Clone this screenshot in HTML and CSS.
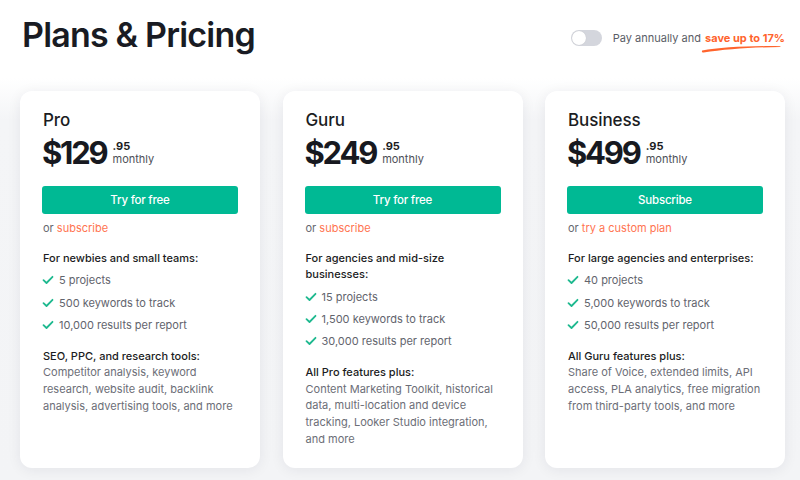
FILE: index.html
```html
<!DOCTYPE html>
<html lang="en">
<head>
<meta charset="utf-8">
<title>Plans &amp; Pricing</title>
<link rel="stylesheet" href="styles.css">
</head>
<body>
<div class="page">
  <header class="top">
    <h1 class="title">Plans &amp; Pricing</h1>
    <div class="billing">
      <span class="toggle"><span class="knob"></span></span>
      <span class="billing-text">Pay annually and <span class="save">save up to 17%<svg class="swoosh" viewBox="0 0 80 8" width="80" height="8"><path d="M1.2 5.6 C 18 2.4, 50 0.6, 79.5 1.2 C 79.6 1.6, 79.4 1.9, 79 1.9 C 52 2.4, 24 4.2, 2.6 7.6 C 1.2 7.8, 0.4 6.2, 1.2 5.6 Z" fill="#ff642d"/></svg></span></span>
    </div>
  </header>

  <main class="cards">
    <section class="card">
      <h2 class="plan">Pro</h2>
      <div class="price"><span class="amount">$129</span><span class="cents"><b>.95</b><span>monthly</span></span></div>
      <button class="cta">Try for free</button>
      <p class="alt">or <a>subscribe</a></p>
      <p class="for">For newbies and small teams:</p>
      <ul class="list">
        <li><svg class="check" viewBox="0 0 12 10" width="12" height="10"><path d="M1.5 5.2 L4.5 8 L10.5 1.8" fill="none" stroke="#1eb98f" stroke-width="1.8" stroke-linecap="round" stroke-linejoin="round"/></svg>5 projects</li>
        <li><svg class="check" viewBox="0 0 12 10" width="12" height="10"><path d="M1.5 5.2 L4.5 8 L10.5 1.8" fill="none" stroke="#1eb98f" stroke-width="1.8" stroke-linecap="round" stroke-linejoin="round"/></svg>500 keywords to track</li>
        <li><svg class="check" viewBox="0 0 12 10" width="12" height="10"><path d="M1.5 5.2 L4.5 8 L10.5 1.8" fill="none" stroke="#1eb98f" stroke-width="1.8" stroke-linecap="round" stroke-linejoin="round"/></svg>10,000 results per report</li>
      </ul>
      <p class="feat-head">SEO, PPC, and research tools:</p>
      <p class="feat">Competitor analysis, keyword research, website audit, backlink analysis, advertising tools, and more</p>
    </section>

    <section class="card">
      <h2 class="plan">Guru</h2>
      <div class="price"><span class="amount">$249</span><span class="cents"><b>.95</b><span>monthly</span></span></div>
      <button class="cta">Try for free</button>
      <p class="alt">or <a>subscribe</a></p>
      <p class="for">For agencies and mid-size<br>businesses:</p>
      <ul class="list">
        <li><svg class="check" viewBox="0 0 12 10" width="12" height="10"><path d="M1.5 5.2 L4.5 8 L10.5 1.8" fill="none" stroke="#1eb98f" stroke-width="1.8" stroke-linecap="round" stroke-linejoin="round"/></svg>15 projects</li>
        <li><svg class="check" viewBox="0 0 12 10" width="12" height="10"><path d="M1.5 5.2 L4.5 8 L10.5 1.8" fill="none" stroke="#1eb98f" stroke-width="1.8" stroke-linecap="round" stroke-linejoin="round"/></svg>1,500 keywords to track</li>
        <li><svg class="check" viewBox="0 0 12 10" width="12" height="10"><path d="M1.5 5.2 L4.5 8 L10.5 1.8" fill="none" stroke="#1eb98f" stroke-width="1.8" stroke-linecap="round" stroke-linejoin="round"/></svg>30,000 results per report</li>
      </ul>
      <p class="feat-head">All Pro features plus:</p>
      <p class="feat">Content Marketing Toolkit, historical data, multi-location and device tracking, Looker Studio integration, and more</p>
    </section>

    <section class="card">
      <h2 class="plan">Business</h2>
      <div class="price"><span class="amount">$499</span><span class="cents"><b>.95</b><span>monthly</span></span></div>
      <button class="cta">Subscribe</button>
      <p class="alt">or <a>try a custom plan</a></p>
      <p class="for">For large agencies and enterprises:</p>
      <ul class="list">
        <li><svg class="check" viewBox="0 0 12 10" width="12" height="10"><path d="M1.5 5.2 L4.5 8 L10.5 1.8" fill="none" stroke="#1eb98f" stroke-width="1.8" stroke-linecap="round" stroke-linejoin="round"/></svg>40 projects</li>
        <li><svg class="check" viewBox="0 0 12 10" width="12" height="10"><path d="M1.5 5.2 L4.5 8 L10.5 1.8" fill="none" stroke="#1eb98f" stroke-width="1.8" stroke-linecap="round" stroke-linejoin="round"/></svg>5,000 keywords to track</li>
        <li><svg class="check" viewBox="0 0 12 10" width="12" height="10"><path d="M1.5 5.2 L4.5 8 L10.5 1.8" fill="none" stroke="#1eb98f" stroke-width="1.8" stroke-linecap="round" stroke-linejoin="round"/></svg>50,000 results per report</li>
      </ul>
      <p class="feat-head">All Guru features plus:</p>
      <p class="feat">Share of Voice, extended limits, API access, PLA analytics, free migration from third-party tools, and more</p>
    </section>
  </main>
</div>
</body>
</html>
```

FILE: styles.css
```css
* { box-sizing: border-box; }
html, body { margin: 0; padding: 0; }
body {
  width: 800px;
  height: 480px;
  overflow: hidden;
  font-family: Inter, "Noto Sans", sans-serif;
  color: #1b1c22;
  background: linear-gradient(#ffffff 0, #ffffff 78px, #f4f5f7 120px, #f3f4f6 100%);
}
.page { padding: 0 15px 0 20px; }
.top {
  display: flex;
  align-items: center;
  justify-content: space-between;
  height: 74px;
  padding-left: 2px;
}
.title {
  margin: 0;
  font-size: 34px;
  font-weight: 600;
  letter-spacing: -0.8px;
  color: #191b23;
  line-height: 40px;
  padding-bottom: 4px;
}
.billing {
  display: flex;
  align-items: center;
  gap: 11px;
  margin-top: 2px;
  margin-right: 0;
}
.toggle {
  width: 31px;
  height: 16px;
  border-radius: 8px;
  background: #d4d6dd;
  padding: 1px;
  display: flex;
}
.knob {
  width: 14px;
  height: 14px;
  border-radius: 50%;
  background: #fff;
  box-shadow: 0 0 1px rgba(0,0,0,0.15);
}
.billing-text {
  font-size: 11px;
  color: #5a5d66;
}
.save {
  position: relative;
  color: #ff642d;
  font-weight: 700;
  margin-left: 1px;
}
.swoosh {
  position: absolute;
  left: -4px;
  top: 14px;
}
.cards {
  display: flex;
  gap: 22.5px;
  margin-top: 17px;
}
.card {
  width: 240px;
  height: 377px;
  background: #fff;
  border-radius: 12px;
  box-shadow: 0 2px 14px rgba(30, 35, 60, 0.07);
  padding: 18px 22px 0 22px;
  display: flex;
  flex-direction: column;
}
.plan {
  margin: 0;
  font-size: 17px;
  line-height: 22px;
  font-weight: 500;
  letter-spacing: -0.1px;
  color: #1b1c22;
  padding-left: 1px;
}
.price {
  display: flex;
  align-items: flex-start;
  margin-top: 5px;
  height: 34px;
}
.amount {
  font-size: 31px;
  line-height: 34px;
  font-weight: 700;
  letter-spacing: -2.2px;
  color: #171920;
}
.cents {
  display: flex;
  flex-direction: column;
  margin-left: 6px;
  margin-top: 4px;
  font-size: 11px;
  line-height: 12.5px;
  color: #4d4f57;
}
.cents b { color: #1b1c22; font-weight: 700; font-size: 11px; }
.cta {
  margin-top: 16px;
  height: 28px;
  width: 100%;
  border: 0;
  border-radius: 3px;
  background: #00b994;
  color: #fff;
  font-family: inherit;
  font-size: 11.5px;
  font-weight: 500;
  letter-spacing: -0.2px;
  padding: 0;
}
.alt {
  margin: 6px 0 0;
  font-size: 11px;
  line-height: 16px;
  color: #666870;
  padding-left: 1px;
}
.alt a { color: #ff7451; }
.for {
  margin: 14px 0 0;
  font-size: 11px;
  line-height: 16.3px;
  color: #1b1c22;
  font-weight: 500;
  padding-left: 1px;
}
.list {
  list-style: none;
  margin: 3px 0 0;
  padding: 0;
}
.list li {
  display: flex;
  align-items: center;
  height: 22.2px;
  font-size: 11px;
  color: #62646d;
}
.check { margin: 0 5px 0 0; flex: none; }
.feat-head {
  margin: 12px 0 0;
  font-size: 11px;
  line-height: 16.5px;
  font-weight: 500;
  color: #1b1c22;
  padding-left: 1px;
}
.feat {
  margin: 0;
  font-size: 11px;
  line-height: 16.7px;
  color: #6c6e77;
  padding-left: 1px;
}
```
